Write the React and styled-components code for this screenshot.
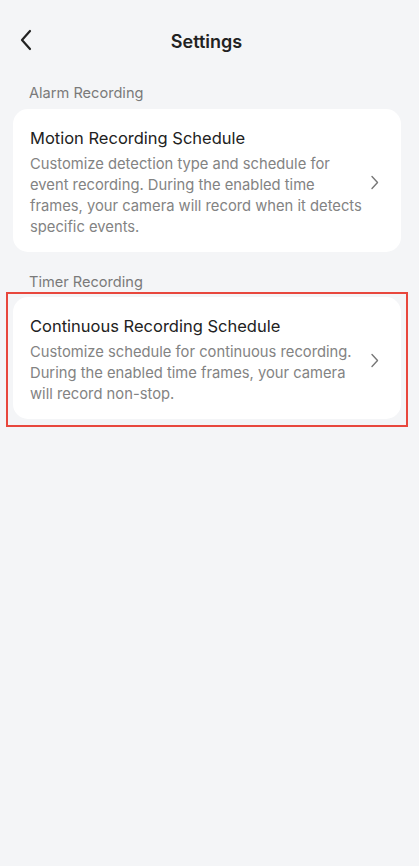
import React from 'react'
import styled, { createGlobalStyle } from 'styled-components'

const GlobalStyle = createGlobalStyle`
  html, body {
    margin: 0;
    padding: 0;
    background: #f4f5f7;
    font-family: Inter, "Noto Sans", sans-serif;
    -webkit-font-smoothing: antialiased;
  }
`

const Page = styled.div`
  min-height: 866px;
  background: #f4f5f7;
`

const Header = styled.header`
  position: relative;
  height: 82px;
  padding-right: 6px;
  display: flex;
  align-items: center;
  justify-content: center;
`

const BackButton = styled.button`
  position: absolute;
  left: 14px;
  top: 27px;
  width: 24px;
  height: 26px;
  padding: 0;
  border: 0;
  background: none;
  display: flex;
  align-items: center;
  justify-content: center;
`

const Title = styled.h1`
  margin: 0;
  font-size: 18px;
  font-weight: 600;
  color: #222;
`

const SectionLabel = styled.div`
  padding: ${p => p.$top}px 0 0 29px;
  font-size: 14.6px;
  line-height: 18px;
  color: #7a7a7a;
`

const Highlight = styled.div`
  position: relative;
  margin: 6px 18px 0 13px;

  &::after {
    content: '';
    position: absolute;
    left: -7px;
    right: -7px;
    top: -5px;
    bottom: -8px;
    border: 2px solid #e8473d;
    pointer-events: none;
  }
`

const Card = styled.div`
  margin: ${p => p.$plain ? '7px 18px 0 13px' : '0'};
  background: #fff;
  border-radius: 15px;
  padding: 18px 22px 14px 17px;
  display: flex;
  align-items: center;
  gap: 4px;
`

const CardText = styled.div`
  flex: 1;
`

const CardTitle = styled.div`
  font-size: 16.5px;
  line-height: 22px;
  color: #222;
`

const CardDesc = styled.div`
  margin-top: 5px;
  font-size: 14.75px;
  line-height: 21px;
  color: #838383;
`

const Chevron = () => (
  <svg width="9" height="15" viewBox="0 0 9 15" fill="none">
    <path d="M2 1.5L7.5 7.5L2 13.5" stroke="#777" strokeWidth="1.4" strokeLinecap="round" strokeLinejoin="round" />
  </svg>
)

function ScheduleCard({ title, children, plain }) {
  return (
    <Card $plain={plain}>
      <CardText>
        <CardTitle>{title}</CardTitle>
        <CardDesc>{children}</CardDesc>
      </CardText>
      <Chevron />
    </Card>
  )
}

export default function App() {
  return (
    <Page>
      <GlobalStyle />
      <Header>
        <BackButton>
          <svg width="14" height="22" viewBox="0 0 14 22" fill="none">
            <path d="M11 2L3 11L11 20" stroke="#222" strokeWidth="2.2" strokeLinecap="round" strokeLinejoin="round" />
          </svg>
        </BackButton>
        <Title>Settings</Title>
      </Header>

      <SectionLabel $top={2}>Alarm Recording</SectionLabel>
      <ScheduleCard plain title="Motion Recording Schedule">
        Customize detection type and schedule for event recording. During the enabled time frames, your camera will record when it detects specific events.
      </ScheduleCard>

      <SectionLabel $top={21}>Timer Recording</SectionLabel>
      <Highlight>
        <ScheduleCard title="Continuous Recording Schedule">
          Customize schedule for continuous recording. During the enabled time frames, your camera will record non-stop.
        </ScheduleCard>
      </Highlight>
    </Page>
  )
}
